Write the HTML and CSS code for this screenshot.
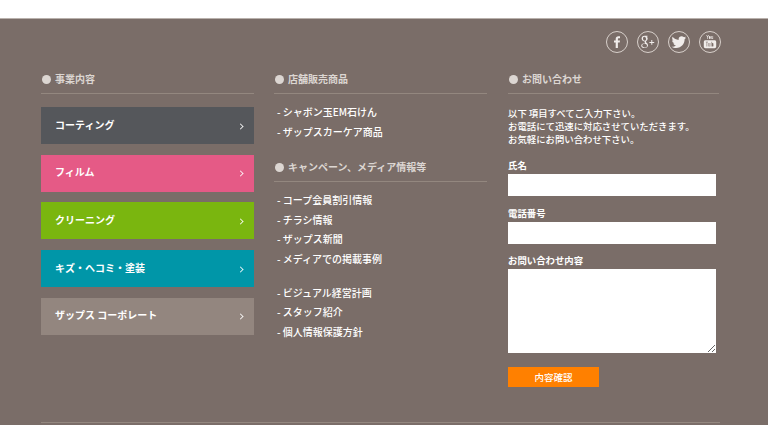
FILE: index.html
```html
<!DOCTYPE html>
<html lang="ja">
<head>
    <meta charset="UTF-8">
    <meta name="viewport" content="width=device-width, initial-scale=1.0">
    <title>Footer</title>
    <link rel="stylesheet" href="styles.css">
</head>
<body>
    <div class="top"></div>
    <footer class="footer">
        <div class="social">
            <a class="social-icon" href="#">
                <svg viewBox="1 1 20 20"><path d="M11.900 17v-5.400h1.800l.3-2.100h-2.100V8.200c0-.6.2-1 1-1H14V5.300c-.2 0-.8-.1-1.600-.1-1.600 0-2.700 1-2.700 2.800v1.500H8v2.100h1.700V17z"/></svg>
            </a>
            <a class="social-icon" href="#">
                <svg viewBox="1 1 20 20"><path d="M10.500 4.800H7.600C5.700 4.800 4.600 6.100 4.600 7.600c0 1.600 1.200 2.800 2.800 2.800h.5c-.1.200-.2.500-.2.800 0 .4.200.7.400 1-1.700 0-3.900.7-3.900 2.500 0 1.500 1.600 2.300 3.300 2.300 2.200 0 3.500-1.300 3.500-2.700 0-2.200-2.100-2.400-2.100-3.500 0-1 1.800-1.300 1.800-3.300 0-.9-.4-1.600-1-2.100h1.100zM7.700 9.700c-1 0-1.700-1-1.700-2.200 0-1 .5-1.800 1.400-1.800 1 0 1.700 1.100 1.700 2.300 0 1-.5 1.700-1.400 1.700zm-.2 3c1.400 0 2.500.9 2.500 2 0 1-.8 1.700-2.200 1.700-1.500 0-2.600-.8-2.600-1.900 0-1 1-1.800 2.300-1.800z"/><path d="M14.300 9h1v1.900h1.900v1h-1.900v1.900h-1v-1.900h-1.900v-1h1.900z"/></svg>
            </a>
            <a class="social-icon" href="#">
                <svg viewBox="1 1 20 20"><path d="M18 6.500c-.5.200-1.100.4-1.700.5.600-.4 1.100-1 1.300-1.600-.6.300-1.200.6-1.900.7-.5-.6-1.300-.9-2.100-.9-1.600 0-3 1.300-3 3 0 .2 0 .5.100.7C8.200 8.700 6 7.500 4.600 5.700c-.3.400-.4 1-.4 1.500 0 1 .5 1.900 1.300 2.500-.5 0-1-.2-1.400-.4 0 1.500 1 2.700 2.400 3-.4.100-.9.100-1.300 0 .4 1.200 1.500 2 2.800 2.100-1.300 1-3 1.500-4.500 1.300 1.300.9 2.900 1.400 4.600 1.400 5.500 0 8.500-4.600 8.500-8.500v-.4c.6-.5 1.100-1 1.400-1.700z"/></svg>
            </a>
            <a class="social-icon" href="#">
                <svg viewBox="1 1 20 20"><path d="M7.300 4h.7l.6 1.500L9.200 4h.7l-1 2.300v1.600h-.6V6.300zM10.800 5.100c.6 0 .9.300.9.900v1.100c0 .5-.3.900-.9.900s-.9-.4-.9-.9V6c0-.6.300-.9.900-.9zm1.500 0h.6v2.100c0 .2.300.2.600-.1v-2h.6v2.800h-.6v-.3c-.6.500-1.200.4-1.200-.3z"/><path fill-rule="evenodd" d="M6.500 9.200h9c1 0 1.700.7 1.700 1.700v4.600c0 1-.7 1.700-1.700 1.700h-9c-1 0-1.700-.7-1.700-1.700v-4.600c0-1 .7-1.700 1.700-1.700zm.3 1.500v.6h.8v4.300h.6v-4.300h.8v-.6zm2.700 1.300v2.900c0 .6.600.7 1.200.2v.3h.6V12h-.6v2.800c-.3.300-.6.300-.6.100V12zm3-1.300V15.600h.6v-.3c.6.600 1.300.3 1.300-.4v-2.100c0-.8-.7-1.100-1.300-.5v-1.600z"/></svg>
            </a>
        </div>

        <div class="columns">
            <section>
                <h2 class="heading">事業内容</h2>
                <ul class="menu">
                    <li><a class="menu-item coating" href="#">コーティング</a></li>
                    <li><a class="menu-item film" href="#">フィルム</a></li>
                    <li><a class="menu-item cleaning" href="#">クリーニング</a></li>
                    <li><a class="menu-item repair" href="#">キズ・ヘコミ・塗装</a></li>
                    <li><a class="menu-item corporate" href="#">ザップス コーポレート</a></li>
                </ul>
            </section>

            <section>
                <h2 class="heading">店舗販売商品</h2>
                <ul class="links">
                    <li><a href="#">- シャボン玉EM石けん</a></li>
                    <li><a href="#">- ザップスカーケア商品</a></li>
                </ul>
                <h2 class="heading">キャンペーン、メディア情報等</h2>
                <ul class="links">
                    <li><a href="#">- コープ会員割引情報</a></li>
                    <li><a href="#">- チラシ情報</a></li>
                    <li><a href="#">- ザップス新聞</a></li>
                    <li><a href="#">- メディアでの掲載事例</a></li>
                </ul>
                <ul class="links">
                    <li><a href="#">- ビジュアル経営計画</a></li>
                    <li><a href="#">- スタッフ紹介</a></li>
                    <li><a href="#">- 個人情報保護方針</a></li>
                </ul>
            </section>

            <section class="contact">
                <h2 class="heading">お問い合わせ</h2>
                <p class="lead">以下 項目すべてご入力下さい。<br>お電話にて迅速に対応させていただきます。<br>お気軽にお問い合わせ下さい。</p>
                <form class="form">
                    <label class="label" for="name">氏名</label>
                    <input class="field" id="name" type="text">
                    <label class="label" for="tel">電話番号</label>
                    <input class="field" id="tel" type="text">
                    <label class="label" for="message">お問い合わせ内容</label>
                    <textarea class="field area" id="message"></textarea>
                    <button class="submit" type="button">内容確認</button>
                </form>
            </section>
        </div>
        <div class="bottom-rule"></div>
    </footer>
</body>
</html>
```

FILE: styles.css
```css
* {
    box-sizing: border-box;
}
html, body {
    height: 425px;
    overflow: hidden;
}
body {
    margin: 0;
    background-color: #fff;
    font-family: "Noto Sans CJK JP", "Noto Sans", sans-serif;
    font-size: 10px;
    color: #fff;
}
a {
    color: inherit;
    text-decoration: none;
}
ul {
    list-style: none;
    margin: 0;
    padding: 0;
}
.top {
    height: 18px;
}
.footer {
    height: 407px;
    padding: 12px 47px 0 41px;
    border-top: 1px solid #b9b1ac;
    background-color: #7a6d68;
}

/* social icons */
.social {
    display: flex;
    justify-content: flex-end;
    gap: 9px;
    height: 22px;
}
.social-icon {
    width: 22px;
    height: 22px;
    border: 1px solid #d8d0cb;
    border-radius: 50%;
}
.social-icon svg {
    display: block;
    width: 20px;
    height: 20px;
    fill: #f0ecea;
}

.columns {
    display: grid;
    grid-template-columns: 213px 213px 212px;
    gap: 20px;
    margin-top: 17px;
}
.contact {
    margin-left: 1px;
}
.heading {
    display: flex;
    align-items: center;
    gap: 4px;
    height: 24px;
    margin: 0;
    padding-bottom: 5px;
    border-bottom: 1px solid #93877f;
    font-size: 10px;
    font-weight: 700;
    line-height: 16px;
    color: #dcd6d2;
}
.heading::before {
    content: "";
    width: 9px;
    height: 9px;
    margin-left: 1px;
    border-radius: 50%;
    background-color: #dcd6d2;
}

/* left column buttons */
.menu {
    display: flex;
    flex-direction: column;
    gap: 10.700px;
    margin-top: 13px;
}
.menu-item {
    display: flex;
    justify-content: space-between;
    align-items: center;
    height: 37px;
    padding: 0 11px 3px 14px;
    font-size: 10px;
    font-weight: 700;
}
.menu-item::after {
    content: "";
    width: 4px;
    height: 4px;
    margin-top: 4px;
    border-top: 1.500px solid #fff;
    border-right: 1.500px solid #fff;
    transform: rotate(45deg) scale(.85);
}
.coating { background-color: #55575b; }
.film { background-color: #e55a86; }
.cleaning { background-color: #7ab60f; }
.repair { background-color: #0096a8; }
.corporate { background-color: #93867f; }

/* center column links */
.links {
    margin: 8px 0 0 3px;
    font-size: 10px;
    font-weight: 500;
    line-height: 19.500px;
    color: #fff;
}
.links + .heading {
    margin-top: 17px;
}
.links + .links {
    margin-top: 14.500px;
}

/* contact form */
.lead {
    margin: 13px 0;
    font-size: 9.400px;
    font-weight: 500;
    line-height: 13px;
    color: #fff;
}
.form {
    display: flex;
    flex-direction: column;
    align-items: flex-start;
}
.label {
    height: 15px;
    font-size: 9.400px;
    font-weight: 700;
    line-height: 13px;
}
.field {
    display: block;
    width: 208px;
    height: 22px;
    margin: 0 0 10.600px;
    padding: 0;
    border: 0;
    background-color: #fff;
}
.area {
    height: 84px;
    margin-bottom: 14px;
}
.submit {
    width: 91px;
    height: 20px;
    padding: 0 0 1px;
    border: 0;
    background-color: #ff8000;
    color: #fff;
    font-family: inherit;
    font-size: 9.500px;
    font-weight: 500;
}
.bottom-rule {
    width: 679px;
    margin-top: 35px;
    border-top: 1px solid #93877f;
}
```
